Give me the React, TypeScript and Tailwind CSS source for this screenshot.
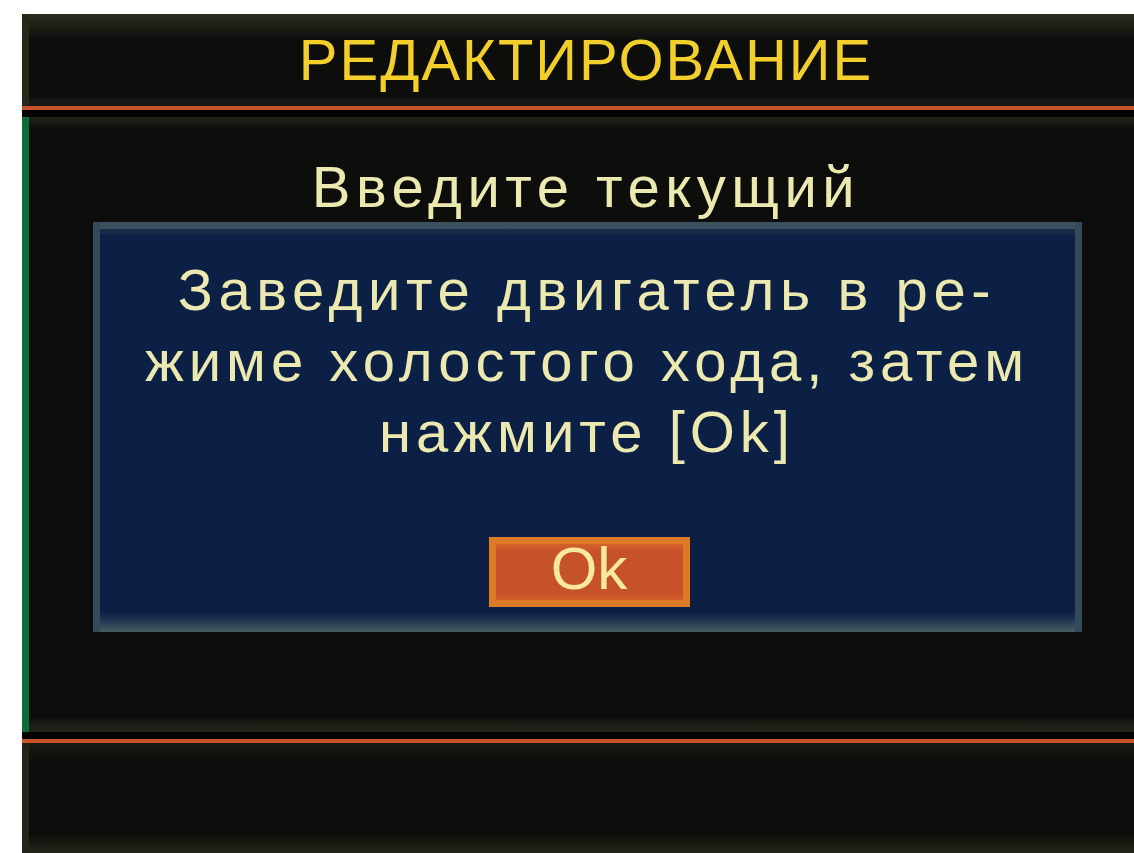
export default function App() {
    return (
        <div className="w-[1134px] h-[853px] overflow-hidden bg-white pt-[14px] pl-[22px] font-['Liberation_Sans',Arial,sans-serif]">
            <div className="w-[1128px] h-[839px] bg-[#0b0b09] flex flex-col">
                {/* title bar */}
                <div className="flex h-[92px]">
                    <div className="w-[7px] bg-[#262619]" />
                    <div className="flex-1 pr-[7px] pt-[17px] text-center text-[58px] leading-none tracking-[2px] text-[#f2cf2b] bg-[linear-gradient(to_bottom,#2c2c20_0px,#1e1e17_12px,#0d0d0b_26px,#0d0d0b_84px,#161613_85px,#161613_92px)]">
                        РЕДАКТИРОВАНИЕ
                    </div>
                </div>
                <div className="h-[4px] bg-[#c8522a]" />
                <div className="h-[7px] bg-[#040404]" />

                {/* work area */}
                <div className="flex h-[615px]">
                    <div className="w-[7px] bg-[#0e6b3c]" />
                    <div className="flex-1 pr-[7px] flex flex-col items-center bg-[linear-gradient(to_bottom,#22221a_0px,#1a1a14_6px,#0d0d0b_11px,#0d0d0b_600px,#1a1a14_606px,#23231b_615px)]">
                        <div className="pt-[41px] text-[58px] leading-none tracking-[5.5px] text-[#ebe9b0]">
                            Введите текущий
                        </div>

                        {/* message box */}
                        <div className="mt-[6px] ml-[2px] w-[989px] h-[410px] border-x-[7px] border-[#34495a] flex flex-col items-center pt-[32px] bg-[linear-gradient(to_bottom,#3c505e_0px,#3c505e_7px,#1a2f4a_7px,#142848_12px,#0c1f45_13px,#0c1f45_390px,#15294a_394px,#1e3650_398px,#2c4257_402px,#3c4f5b_406px,#4a5b5f_410px)]">
                            <div className="text-center text-[58px] leading-[71px] tracking-[5px] text-[#ebe9b0]">
                                <div className="tracking-[5.6px]">Заведите двигатель в ре-</div>
                                <div>жиме холостого хода, затем</div>
                                <div>нажмите [Ok]</div>
                            </div>
                            <div className="mt-[70px] ml-[4px] w-[201px] h-[70px] border-[7px] border-[#dc7a28] pt-[2px] text-center text-[60px] leading-[46px] text-[#f8e8a0] bg-[linear-gradient(to_bottom,#d2622a_0px,#c6522a_8px,#c6522a_48px,#d05e2a_56px)]">
                                Ok
                            </div>
                        </div>
                    </div>
                </div>

                <div className="h-[7px] bg-[#040404]" />
                <div className="h-[4px] bg-[#c8522a]" />

                {/* status bar */}
                <div className="flex h-[110px]">
                    <div className="w-[7px] bg-[#24241a]" />
                    <div className="flex-1 bg-[linear-gradient(to_bottom,#1c1c15_0px,#141410_8px,#0d0d0b_18px,#0d0d0b_92px,#1a1a14_100px,#24241c_110px)]" />
                </div>
            </div>
        </div>
    );
}
